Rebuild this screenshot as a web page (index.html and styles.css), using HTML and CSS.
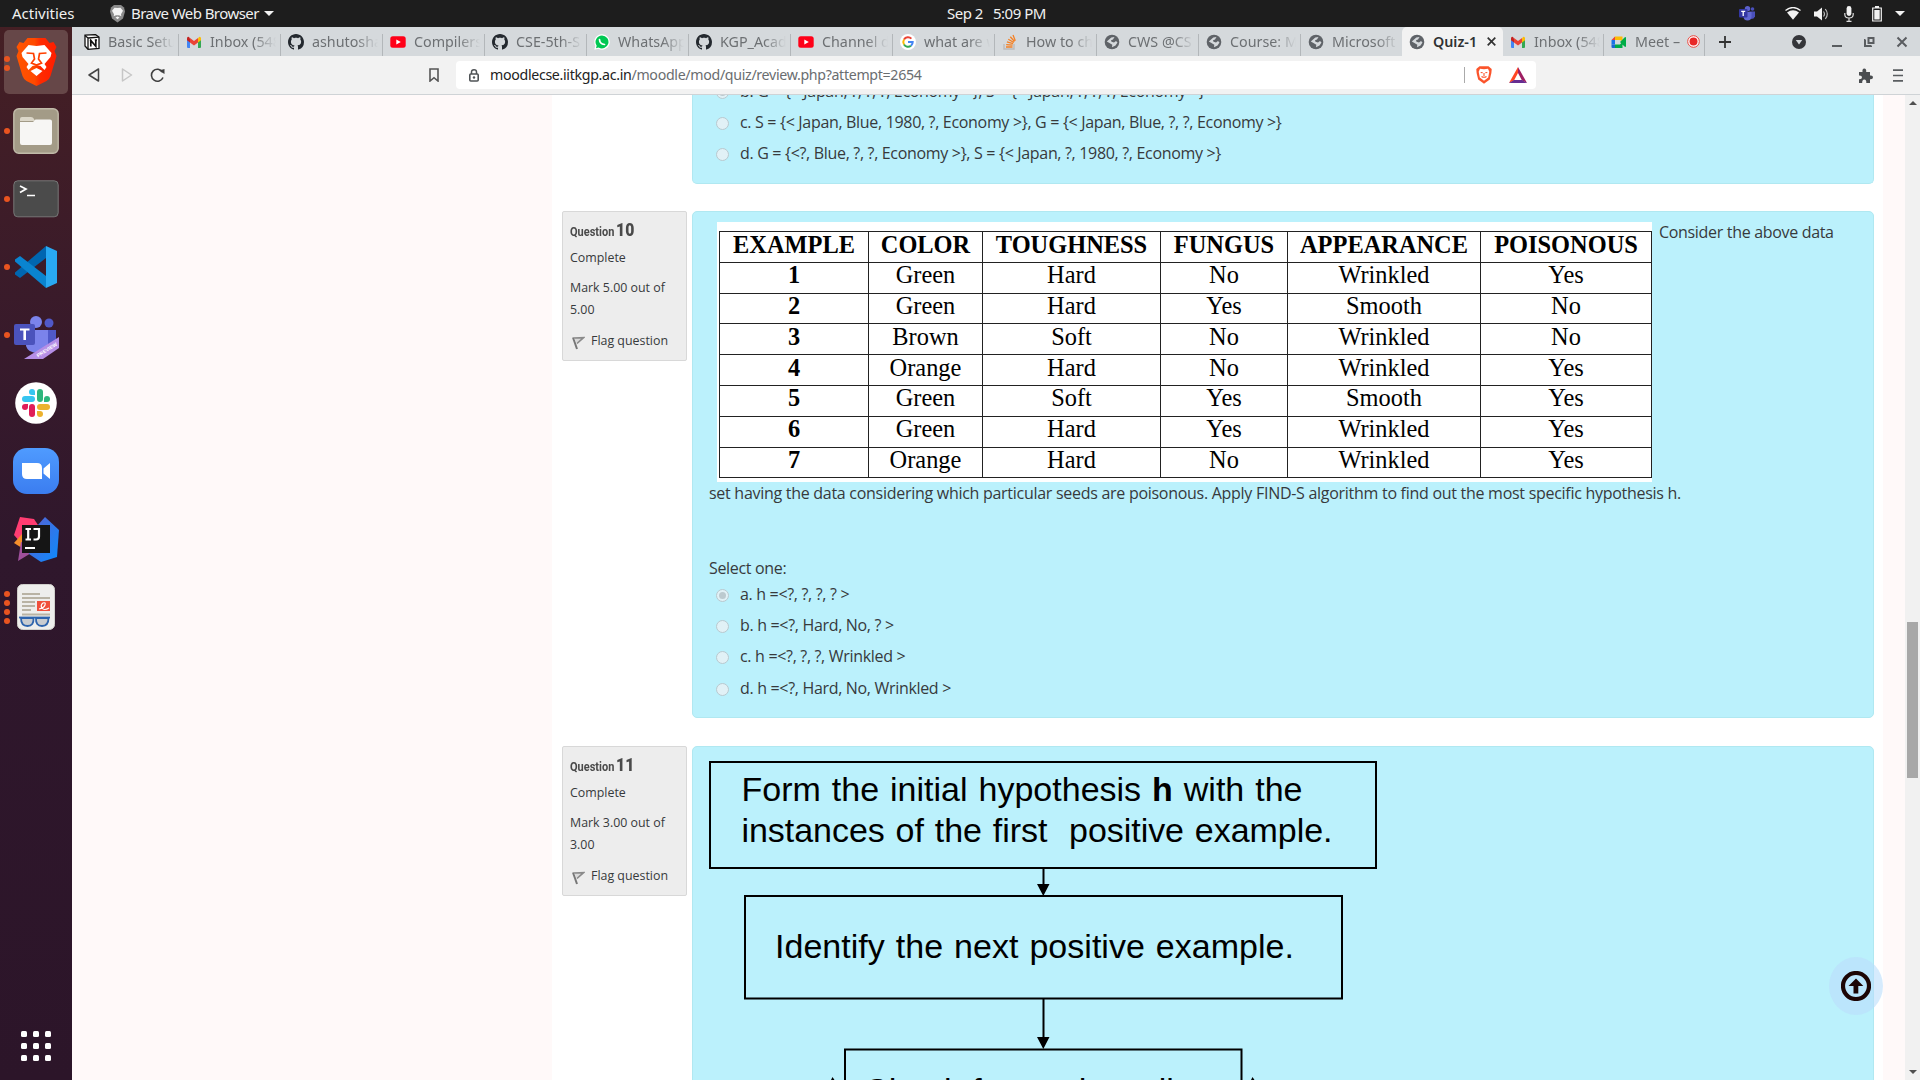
FILE: index.html
```html
<!DOCTYPE html>
<html lang="en">
<head>
<meta charset="utf-8">
<title>Quiz-1</title>
<link rel="stylesheet" href="styles.css">
</head>
<body>
<svg width="0" height="0" class="defs">
  <defs>
    <linearGradient id="bg-brave" x1="0" x2="1" y1="0" y2="0"><stop offset="0" stop-color="#ff5500"/><stop offset=".45" stop-color="#ff4a00"/><stop offset=".6" stop-color="#ff2a00"/><stop offset="1" stop-color="#ff1d00"/></linearGradient>
    <linearGradient id="bg-zoom" x1="0" x2="0" y1="0" y2="1"><stop offset="0" stop-color="#4f9bff"/><stop offset="1" stop-color="#3b7df0"/></linearGradient>
    <linearGradient id="bg-ij" x1="0" x2="1" y1="0" y2="1"><stop offset="0" stop-color="#5a5fd0"/><stop offset="1" stop-color="#0a8cff"/></linearGradient>
    <symbol id="i-lion" viewBox="0 0 40 48">
      <path fill="url(#bg-brave)" d="M11 0H29L33 5L37 4L40 9L38 13L40 18L34 38Q33 41 30 43L20 48L10 43Q7 41 6 38L0 18L2 13L0 9L3 4L7 5Z"/>
      <path fill="#fff" d="M20 8L28 7L35 15L34 19L28 26L30 29L28 32L24 28L20 27L16 28L12 32L10 29L12 26L6 19L5 15L12 7ZM20 30L26 33L20 38L14 33Z"/>
      <path fill="none" stroke="#ff4000" stroke-width="1.7" d="M10 15L17 15.500L18 21L15 25L20 27L25 25L22 21L23 15.500L30 15"/>
    </symbol>
    <symbol id="i-github" viewBox="0 0 16 16"><path fill="#24292f" d="M8 0C3.580 0 0 3.580 0 8c0 3.540 2.290 6.530 5.470 7.590.4.070.55-.17.55-.38 0-.19-.01-.82-.01-1.490-2.010.37-2.530-.49-2.690-.94-.09-.23-.48-.94-.82-1.130-.28-.15-.68-.52-.01-.53.63-.01 1.080.58 1.230.82.72 1.210 1.870.87 2.330.66.07-.52.28-.87.51-1.070-1.780-.2-3.640-.89-3.640-3.950 0-.87.31-1.590.82-2.150-.08-.2-.36-1.020.08-2.120 0 0 .67-.21 2.200.82.64-.18 1.320-.27 2-.27s1.360.09 2 .27c1.530-1.040 2.200-.82 2.200-.82.44 1.100.16 1.920.08 2.120.51.56.82 1.270.82 2.150 0 3.070-1.870 3.750-3.650 3.950.29.25.54.73.54 1.480 0 1.070-.01 1.930-.01 2.200 0 .21.15.46.55.38A8.010 8.010 0 0 0 16 8c0-4.420-3.580-8-8-8z"/></symbol>
    <symbol id="i-gmail" viewBox="0 0 16 16"><path fill="#4285f4" d="M1 4v9q0 1 1 1h2V7z"/><path fill="#34a853" d="M15 4v9q0 1-1 1h-2V7z"/><path fill="#fbbc04" d="M12 4.500L13 3q2-.7 2 1.500v1.800L12 8.500z"/><path fill="#c5221f" d="M1 4.500Q1 2.300 3 3l1 1.500v4L1 6.300z"/><path fill="#ea4335" d="M4 4l4 3 4-3v4.500l-4 3-4-3z"/></symbol>
    <symbol id="i-yt" viewBox="0 0 16 16"><rect x=".3" y="2.300" width="15.400" height="11.400" rx="2.500" fill="#ff0018"/><path fill="#fff" d="M6.300 5.600L10.800 8l-4.500 2.400z"/></symbol>
    <symbol id="i-globe" viewBox="0 0 16 16"><circle cx="8" cy="8" r="7.300" fill="#5f6368"/><path fill="#d5d9dc" d="M2.800 7.500L7.300 3.500L10.500 3L9 5.500L7 6.200L7.500 7.800L10 8.500L12 7L13.500 8.500L11.500 11.500L8 13.300L8.300 10.700L5 8.800z"/></symbol>
  </defs>
</svg>

<header class="topbar">
  <span class="activities">Activities</span>
  <svg class="app-icon" width="15" height="18" viewBox="0 0 15 18"><path fill="#8b8b8b" d="M4 0h7l3 2.500 1 4-2 7-5.500 4-5.500-4-2-7 1-4z"/><path fill="#f4f4f4" d="M7.500 3l3-.3 2.500 3-2 3.500.3 2-2.300-1-1.500 0-1.500 0-2.300 1 .3-2L2 5.700l2.500-3zM7.500 11.500l2 1-2 1.700-2-1.700z"/></svg>
  <span class="app-name">Brave Web Browser</span>
  <i class="caret"></i>
  <span class="date">Sep 2</span><span class="time">5:09 PM</span>
  <div class="tray">
    <svg class="tr-teams" width="17" height="15" viewBox="0 0 17 15"><circle cx="8.500" cy="2.800" r="2.700" fill="#5b61cc"/><circle cx="13.500" cy="3" r="1.800" fill="#4a50bb"/><path fill="#4a50bb" d="M10 5.500h6v5q-1 2.500-4 2.500z"/><path fill="#6268d3" d="M5 6h7.500v5q-.5 3.500-4 3.500t-4-3.500z"/><rect y="3" width="8.500" height="8.500" rx="1" fill="#3437a3"/><path stroke="#fff" stroke-width="1.300" d="M2.200 5.300h4M4.200 5v5"/></svg>
    <svg class="tr-wifi" width="16" height="13" viewBox="0 0 16 13"><path d="M.5 3.500Q8-2.500 15.500 3.500" fill="none" stroke="#f2f2f2" stroke-width="1.300"/><path fill="#f2f2f2" d="M2 5.500Q8 .800 14 5.500L8 12.800z"/></svg>
    <svg class="tr-vol" width="15" height="14" viewBox="0 0 15 14"><path fill="#f2f2f2" d="M0 4.500h3L8 .5v13L3 9.500H0z"/><path d="M9.500 4.500q2 2.500 0 5M11.300 2q4 5 0 10" fill="none" stroke="#bbb" stroke-width="1.200"/></svg>
    <svg class="tr-mic" width="10" height="16" viewBox="0 0 10 16"><rect x="2.600" y="0" width="4.800" height="10" rx="2.400" fill="#f2f2f2"/><path d="M.8 7v1.500q0 3.500 4.200 3.500t4.200-3.500V7M5 12v3M2.500 15.300h5" fill="none" stroke="#ddd" stroke-width="1.200"/></svg>
    <svg class="tr-bat" width="10" height="16" viewBox="0 0 10 16"><path fill="none" stroke="#f2f2f2" stroke-width="1.200" d="M.7 2h8.600v13H.7z"/><path fill="#f2f2f2" d="M3 0h4v2H3zM2.300 4h5.400v9.500H2.300z"/></svg>
    <i class="caret"></i>
  </div>
</header>

<div class="desktop">
  <nav class="dock">
    <div class="app active"><i class="dots"><b></b><b></b></i><svg width="41" height="48"><use href="#i-lion"/></svg></div>
    <div class="app"><i class="dots"><b></b></i>
      <svg width="46" height="46" viewBox="0 0 46 46"><rect x=".8" y=".8" width="44.400" height="44.400" rx="5" fill="#a39b87" stroke="#c1bba9" stroke-width="1.400"/><path fill="#dcd7c9" d="M7 13V11q0-2 2-2h9q2 0 3 2l1 2z"/><path fill="#f7f6f4" d="M7 14h13l2.500-2.500H37q2 0 2 2V35q0 2-2 2H9q-2 0-2-2z"/></svg></div>
    <div class="app"><i class="dots"><b></b></i>
      <svg width="46" height="38" viewBox="0 0 46 38"><rect x=".8" y=".8" width="44.400" height="36" rx="4" fill="#4b4b4b" stroke="#777" stroke-width="1"/><path d="M7 6l6 3-6 3.500M14 15.500h8" fill="none" stroke="#fff" stroke-width="1.700"/></svg></div>
    <div class="app"><i class="dots"><b></b></i>
      <svg width="42" height="42" viewBox="0 0 42 42"><path fill="#0066b0" d="M31 0v12L5 32l-5-3.500v-2z"/><path fill="#0a84d0" d="M5 10L31 30v12L0 15.500v-2z"/><path fill="#29a9f2" d="M31 0l11 5v32l-11 5z"/></svg></div>
    <div class="app teams"><i class="dots"><b></b></i>
      <svg width="46" height="46" viewBox="0 0 46 46"><circle cx="23" cy="7" r="6" fill="#7b83eb"/><circle cx="36" cy="8" r="4.500" fill="#5059c9"/><path fill="#5059c9" d="M30 15h13v12q-1 7-8 7-5 0-8-3z"/><path fill="#7b83eb" d="M14 15h21v14q0 9-10 9t-12-7z"/><rect x="1" y="9" width="21" height="21" rx="2" fill="#4b53bc"/><path fill="#fff" d="M7 13.500h9.500v2H13V25h-2.600v-9.500H7z"/><path fill="#b58ee6" d="M11 44L46 22v11L30 44z"/><text transform="translate(25 42.500) rotate(-32)" class="preview">PREVIEW</text></svg></div>
    <div class="app">
      <svg width="42" height="42" viewBox="0 0 42 42"><circle cx="21" cy="21" r="20.800" fill="#fff"/><g fill="#36c5f0"><rect x="7" y="14" width="13" height="6" rx="3"/><path d="M17 7a3 3 0 0 1 3 3v3h-3a3 3 0 0 1 0-6z"/></g><g fill="#2eb67d"><rect x="22" y="7" width="6" height="13" rx="3"/><path d="M35 17a3 3 0 0 1-3 3h-3v-3a3 3 0 0 1 6 0z"/></g><g fill="#ecb22e"><rect x="22" y="22" width="13" height="6" rx="3"/><path d="M25 35a3 3 0 0 1-3-3v-3h3a3 3 0 0 1 0 6z"/></g><g fill="#e01e5a"><rect x="14" y="22" width="6" height="13" rx="3"/><path d="M7 25a3 3 0 0 1 3-3h3v3a3 3 0 0 1-6 0z"/></g></svg></div>
    <div class="app">
      <svg width="46" height="46" viewBox="0 0 46 46"><rect width="46" height="46" rx="14" fill="url(#bg-zoom)"/><path fill="#fff" d="M9 15h15q5 0 5 5v11H14q-5 0-5-5zM30.500 20.500L37 15v16l-6.500-5.500z"/></svg></div>
    <div class="app">
      <svg width="46" height="46" viewBox="0 0 46 46"><path fill="#ff3d72" d="M7 1l14 2 8 12L8 27 1 19z"/><path fill="#f58f2c" d="M1 27l8-9v14z"/><path fill="#a0509c" d="M8 26l20 5L5 45z"/><path fill="url(#bg-ij)" d="M32 1l14 13-2 27-16 5-12-8 8-28z"/><rect x="9" y="9" width="28" height="28" fill="#151515"/><path d="M12.500 13h5.500M12.500 23.500h5.500M15.200 13v10.500M20.500 13h5.500v7.500q0 3-3 3h-2.500" fill="none" stroke="#fff" stroke-width="2.200"/><path fill="#fff" d="M12 31h10v2H12z"/></svg></div>
    <div class="app"><i class="dots"><b></b><b></b><b></b><b></b></i>
      <svg width="38" height="46" viewBox="0 0 38 46"><rect x=".5" y=".5" width="37" height="45" rx="5" fill="#eeeeec" stroke="#cfcfcb"/><path stroke="#b9b3a4" stroke-width="2" d="M5 10h18M5 14h28M5 18h13M5 22h13M5 26h9M5 30.500h28"/><rect x="20" y="17" width="13" height="10" fill="#f0503c"/><path d="M22 25q5-1 6-4t-2-2q-3 2-1 5t7 0" fill="none" stroke="#fff" stroke-width="1.200"/><g fill="#c9ccd0" stroke="#2e64ad" stroke-width="1.800"><path d="M4 34h12.500q.5 8-6 8t-6.500-8zM19 34h12.500q0 8-6.500 8t-6-8z"/><path d="M2 33.500h31"/></g></svg></div>
    <div class="launcher"><b></b><b></b><b></b><b></b><b></b><b></b><b></b><b></b><b></b></div>
  </nav>

  <div class="browser">
    <div class="tabs">
      <div class="tab first"><svg class="fav" viewBox="0 0 16 16"><path fill="#fff" stroke="#111" stroke-width="1.300" d="M1 1.200l10.500-.6L15 3v11.500l-11 .8L1 12z"/><path fill="none" stroke="#111" stroke-width="1.300" d="M1 1.500L4 4v11M4 4l11-.8"/><path fill="none" stroke="#111" stroke-width="1.700" d="M6.800 12.500V6.500l5 5.800V6M5.800 6.500h2M10.800 6h2.200"/></svg><span>Basic Setu</span></div>
      <div class="tab"><svg class="fav"><use href="#i-gmail"/></svg><span>Inbox (548</span></div>
      <div class="tab"><svg class="fav"><use href="#i-github"/></svg><span>ashutosha</span></div>
      <div class="tab"><svg class="fav"><use href="#i-yt"/></svg><span>Compilers</span></div>
      <div class="tab"><svg class="fav"><use href="#i-github"/></svg><span>CSE-5th-S</span></div>
      <div class="tab"><svg class="fav" viewBox="0 0 16 16"><path fill="#fff" d="M8 .3a7.700 7.700 0 1 1-3.700 14.400L.3 15.700l1-3.900A7.700 7.700 0 0 1 8 .3z"/><path fill="#00c853" d="M8 1.500a6.500 6.500 0 1 1-3.500 12L2 14.200l.7-2.500A6.500 6.500 0 0 1 8 1.500z"/><path fill="none" stroke="#fff" stroke-width="1.700" stroke-linecap="round" d="M5.500 5.500q.2 4.500 5 5"/></svg><span>WhatsApp</span></div>
      <div class="tab"><svg class="fav"><use href="#i-github"/></svg><span>KGP_Acad</span></div>
      <div class="tab"><svg class="fav"><use href="#i-yt"/></svg><span>Channel d</span></div>
      <div class="tab"><svg class="fav" viewBox="0 0 16 16"><circle cx="8" cy="8" r="8" fill="#fff"/><g fill="none" stroke-width="2"><path stroke="#ea4335" d="M4 5.500A4.800 4.800 0 0 1 11.400 4.600"/><path stroke="#fbbc05" d="M4 5.500A4.800 4.800 0 0 0 4 10.500"/><path stroke="#34a853" d="M4 10.500A4.800 4.800 0 0 0 11 11.700"/><path stroke="#4285f4" d="M11 11.700A4.800 4.800 0 0 0 12.700 8H8"/></g></svg><span>what are w</span></div>
      <div class="tab"><svg class="fav" viewBox="0 0 16 16"><path d="M2 10v5h10v-5" fill="none" stroke="#bcbbbb" stroke-width="1.400"/><path d="M4 13h6.500M4.200 10.600l6.400.6M4.900 7.900l6.200 1.700M6.300 5.200l5.500 3.300M8.300 2.700l4.200 4.800M11 1l2.300 5.800" stroke="#f48024" stroke-width="1.300"/></svg><span>How to ch</span></div>
      <div class="tab"><svg class="fav"><use href="#i-globe"/></svg><span>CWS @CS</span></div>
      <div class="tab"><svg class="fav"><use href="#i-globe"/></svg><span>Course: M</span></div>
      <div class="tab noline"><svg class="fav"><use href="#i-globe"/></svg><span>Microsoft</span></div>
      <div class="tab current"><svg class="fav"><use href="#i-globe"/></svg><span>Quiz-1</span><svg class="close" width="9" height="9" viewBox="0 0 9 9"><path d="M.7.700l7.600 7.600M8.300.700L.7 8.300" stroke="#333" stroke-width="1.700"/></svg></div>
      <div class="tab narrow"><svg class="fav"><use href="#i-gmail"/></svg><span>Inbox (548</span></div>
      <div class="tab narrow meet"><svg class="fav" viewBox="0 0 16 16"><path fill="#ea4335" d="M.5 6L4 2.500V6z"/><path fill="#1a73e8" d="M.5 6H4v4.500H.5z"/><path fill="#1967d2" d="M.5 10.500H4V14H1.500q-1 0-1-1z"/><path fill="#fbbc04" d="M4 2.500h7.500V7L8.500 6H4z"/><path fill="#00ac47" d="M4 10.500h5l2.500-3V14H4zM9 8l4.500-4.500q1.500-1 1.500.5v8q0 1.500-1.500.5z"/></svg><span>Meet –</span><svg class="rec" width="13" height="13" viewBox="0 0 13 13"><circle cx="6.500" cy="6.500" r="5.800" fill="#fff" stroke="#e8453c" stroke-width="1"/><circle cx="6.500" cy="6.500" r="4" fill="#e82727"/></svg></div>
      <svg class="plus" width="12" height="12" viewBox="0 0 12 12"><path d="M6 0v12M0 6h12" stroke="#333" stroke-width="1.800"/></svg>
      <svg class="win" width="112" height="16" viewBox="0 0 112 16"><circle cx="7" cy="8" r="7" fill="#35363a"/><path fill="#d5d9dc" d="M3.800 6h6.400L7 10.500z"/><path stroke="#5a5d60" stroke-width="2" d="M40 12h10"/><path fill="none" stroke="#5a5d60" stroke-width="2" d="M73.500 6H73v6h6v-.5M76.500 4h5v5h-5z"/><path stroke="#5a5d60" stroke-width="2" d="M105.500 3.500l9 9M114.500 3.500l-9 9"/></svg>
    </div>
    <div class="toolbar">
      <svg class="back" width="12" height="14" viewBox="0 0 12 14"><path d="M10.500 1v12L1 7z" fill="none" stroke="#444" stroke-width="1.500" stroke-linejoin="round"/></svg>
      <svg class="fwd" width="12" height="14" viewBox="0 0 12 14"><path d="M1.500 1v12L10.500 7z" fill="none" stroke="#c6c6c6" stroke-width="1.500" stroke-linejoin="round"/></svg>
      <svg class="reload" width="15" height="15" viewBox="0 0 15 15"><path d="M12.500 4A6 6 0 1 0 13 9.500" fill="none" stroke="#3f3f3f" stroke-width="1.600"/><path fill="#3f3f3f" d="M8.800 2.500L14.500 1v5z"/></svg>
      <svg class="mark" width="10" height="14" viewBox="0 0 10 14"><path d="M1 1h8v12L5 9.700 1 13z" fill="none" stroke="#555" stroke-width="1.600"/></svg>
      <div class="omni">
        <svg class="lock" width="10" height="13" viewBox="0 0 10 13"><rect x=".8" y="5" width="8.400" height="7" rx="1" fill="none" stroke="#4f5356" stroke-width="1.600"/><path d="M2.500 5V3q0-2.200 2.500-2.200T7.500 3v2" fill="none" stroke="#4f5356" stroke-width="1.500"/><circle cx="5" cy="8.500" r="1.200" fill="#4f5356"/></svg>
        <span class="url"><em>moodlecse.iitkgp.ac.in</em>/moodle/mod/quiz/review.php?attempt=2654</span>
        <i class="sep"></i>
        <svg class="shield" width="16" height="18" viewBox="0 0 16 18"><path fill="#fb542b" d="M3.500.3h9L15.700 3l-.3 4-1.600 6.500L8 17.700 2.200 13.500.6 7 .3 3z"/><path fill="#fff" d="M8 3.300l4-.5 1.300 3-1.100 5.800L8 14.800 3.800 11.600 2.700 5.800l1.300-3z"/><path d="M4.700 6.500l2 .3M11.300 6.500l-2 .3M8 7v3M5.500 10.500q2.500 1.500 5 0" stroke="#fb542b" stroke-width="1.100" fill="none"/></svg>
        <svg class="bat" width="18" height="16" viewBox="0 0 18 16"><path fill="#ff4724" d="M9 0L0 16l5-2.500L9 6z"/><path fill="#9e1f63" d="M9 0l9 16-5-2.500L9 6z"/><path fill="#662d91" d="M0 16h18l-5-3H5z"/></svg>
      </div>
      <svg class="ext" width="15" height="15" viewBox="0 0 15 15"><path fill="#4a4d50" d="M1 4h3.500Q4 .500 6.300.500T8.200 4H12v3.500q3-.5 3 1.800t-3 1.900V15H8.300q.3-3.500-2-3.500T4.200 15H1v-3.800q3 .2 3-1.900T1 7.500z"/></svg>
      <svg class="menu" width="10" height="13" viewBox="0 0 10 13"><path d="M0 1.200h10M0 6.500h10M0 11.800h10" stroke="#5a5d60" stroke-width="1.700"/></svg>
    </div>

    <div class="viewport">
      <div class="gutter"></div>
      <main class="page">
        <section class="question prev">
          <div class="body">
            <label class="opt"><i class="radio on"></i>b. G = {&lt; Japan, ?, ?, ?, Economy &gt;}, S = {&lt; Japan, ?, ?, ?, Economy &gt;}</label>
            <label class="opt"><i class="radio"></i>c. S = {&lt; Japan, Blue, 1980, ?, Economy &gt;}, G = {&lt; Japan, Blue, ?, ?, Economy &gt;}</label>
            <label class="opt"><i class="radio"></i>d. G = {&lt;?, Blue, ?, ?, Economy &gt;}, S = {&lt; Japan, ?, 1980, ?, Economy &gt;}</label>
          </div>
        </section>

        <section class="question q10">
          <aside class="info">
            <h3><span>Question</span><b>10</b></h3>
            <p>Complete</p>
            <p class="grade">Mark 5.00 out of<br>5.00</p>
            <p class="flag"><svg width="13" height="14" viewBox="0 0 13 14"><path d="M1 1.500L5 13" stroke="#777" stroke-width="2"/><path d="M2 2l9.500-.3L5 7.500" fill="#d9d9d9" stroke="#8a8a8a" stroke-width="1.600"/></svg>Flag question</p>
          </aside>
          <div class="body">
            <div class="lead">
              <div class="figure">
                <table class="data">
                  <colgroup><col class="c1"><col class="c2"><col class="c3"><col class="c4"><col class="c5"><col class="c6"></colgroup>
                  <tr class="head"><th>EXAMPLE</th><th>COLOR</th><th>TOUGHNESS</th><th>FUNGUS</th><th>APPEARANCE</th><th>POISONOUS</th></tr>
                  <tr><th>1</th><td>Green</td><td>Hard</td><td>No</td><td>Wrinkled</td><td>Yes</td></tr>
                  <tr><th>2</th><td>Green</td><td>Hard</td><td>Yes</td><td>Smooth</td><td>No</td></tr>
                  <tr><th>3</th><td>Brown</td><td>Soft</td><td>No</td><td>Wrinkled</td><td>No</td></tr>
                  <tr><th>4</th><td>Orange</td><td>Hard</td><td>No</td><td>Wrinkled</td><td>Yes</td></tr>
                  <tr><th>5</th><td>Green</td><td>Soft</td><td>Yes</td><td>Smooth</td><td>Yes</td></tr>
                  <tr><th>6</th><td>Green</td><td>Hard</td><td>Yes</td><td>Wrinkled</td><td>Yes</td></tr>
                  <tr><th>7</th><td>Orange</td><td>Hard</td><td>No</td><td>Wrinkled</td><td>Yes</td></tr>
                </table>
              </div>
              <span>Consider the above data</span>
            </div>
            <p class="rest">set having the data considering which particular seeds are poisonous. Apply FIND-S algorithm to find out the most specific hypothesis h.</p>
            <p class="select">Select one:</p>
            <label class="opt"><i class="radio on"></i>a. h =&lt;?, ?, ?, ? &gt;</label>
            <label class="opt"><i class="radio"></i>b. h =&lt;?, Hard, No, ? &gt;</label>
            <label class="opt"><i class="radio"></i>c. h =&lt;?, ?, ?, Wrinkled &gt;</label>
            <label class="opt"><i class="radio"></i>d. h =&lt;?, Hard, No, Wrinkled &gt;</label>
          </div>
        </section>

        <section class="question q11">
          <aside class="info">
            <h3><span>Question</span><b>11</b></h3>
            <p>Complete</p>
            <p class="grade">Mark 3.00 out of<br>3.00</p>
            <p class="flag"><svg width="13" height="14" viewBox="0 0 13 14"><path d="M1 1.500L5 13" stroke="#777" stroke-width="2"/><path d="M2 2l9.500-.3L5 7.500" fill="#d9d9d9" stroke="#8a8a8a" stroke-width="1.600"/></svg>Flag question</p>
          </aside>
          <div class="body">
            <svg class="flow" width="720" height="333" viewBox="693 747 720 333">
              <g fill="none" stroke="#000" stroke-width="2">
                <path d="M710 762H1376V868H710zM745 896H1342V998.500H745zM845 1100V1049.500H1241.500V1100"/>
                <path d="M1043.500 868V888M1043.500 999V1040"/>
              </g>
              <path d="M1037 884h12.500l-6.200 12zM1037 1037h12.500l-6.200 12z"/>
              <text x="741.500" y="800.500" textLength="561">Form the initial hypothesis <tspan font-weight="bold">h</tspan> with the</text>
              <text x="741.500" y="842" textLength="591" xml:space="preserve">instances of the first  positive example.</text>
              <text x="775" y="958" textLength="519">Identify the next positive example.</text>
              <text x="864" y="1102" textLength="369">Check for each attribute</text>
              <path d="M831 1080l1.500-3 2 3zM1251 1080l1.500-3 2 3z"/>
            </svg>
          </div>
        </section>
      </main>
      <div class="gutter right"></div>
      <div class="scrollbar"><i class="up"></i><i class="thumb"></i><i class="down"></i></div>
      <div class="totop"><svg width="30" height="30" viewBox="0 0 30 30"><circle cx="15" cy="15" r="13" fill="none" stroke="#1c0505" stroke-width="4.200"/><path fill="#1c0505" d="M15 7.500l7.300 7.500h-5v7.500h-4.800V15h-5z"/></svg></div>
    </div>
  </div>
</div>
</body>
</html>
```

FILE: styles.css
```css
* { box-sizing: border-box; }
body { margin: 0; width: 1920px; height: 1080px; overflow: hidden; background: #fff; font-family: "Open Sans", "Noto Sans", sans-serif; color: #373a3c; }
.defs { position: absolute; }
p, h3 { margin: 0; }
i, em { font-style: normal; }

.topbar { display: flex; align-items: center; height: 27px; background: #1d1d1d; color: #f0f0f0; font: 15px/27px "Noto Sans", sans-serif; white-space: nowrap; }
.activities { width: 98px; padding-left: 12px; }
.app-icon { margin-left: 12px; }
.app-name { margin-left: 6px; width: 128px; letter-spacing: -.56px; }
.caret { border: 5px solid transparent; border-top-color: #f2f2f2; border-bottom: 0; margin-left: 5px; }
.date { margin-left: 673px; width: 46px; letter-spacing: -.5px; }
.time { width: 56px; letter-spacing: -.5px; }
.tray { display: flex; align-items: center; margin-left: auto; padding-right: 15px; }
.tr-wifi { margin-left: 29px; }
.tr-vol { margin-left: 13px; }
.tr-mic { margin-left: 15px; }
.tr-bat { margin-left: 18px; }
.tray .caret { margin-left: 13px; }

.desktop { display: flex; height: 1053px; }
.dock { width: 72px; display: flex; flex-direction: column; padding-top: 1px; background: linear-gradient(#451f24, #381a2b 30%, #2f172c 50%, #2c1529); }
.app { position: relative; height: 68px; flex: none; display: flex; align-items: center; justify-content: center; }
.app:not(.active) { padding-top: 2px; }
.app.teams { padding-top: 8px; }
.app.active::before { content: ""; position: absolute; inset: 2px 4px; background: #664748; border-radius: 5px; }
.app svg { position: relative; }
.dots { position: absolute; left: 4px; top: 1px; height: 100%; display: flex; flex-direction: column; justify-content: center; gap: 3px; }
.dots b { width: 6px; height: 6px; border-radius: 50%; background: #e95420; }
.preview { font: bold 5px "Liberation Sans", sans-serif; fill: #fff; }
.launcher { margin: auto auto 19px; display: grid; grid-template-columns: repeat(3, 6px); gap: 6px; }
.launcher b { width: 6px; height: 6px; border-radius: 1.500px; background: #fff; }

.browser { flex: 1; display: flex; flex-direction: column; min-width: 0; }
.tabs { height: 29px; display: flex; align-items: center; background: #d5d9dc; color: #6d7073; font: 14.300px/27px "Noto Sans", sans-serif; }
.tab { width: 102px; height: 29px; display: flex; align-items: center; padding-left: 7px; flex: none; position: relative; }
.tab::after { content: ""; position: absolute; right: 0; top: 7px; bottom: 0; width: 1px; background: #b3b7ba; }
.tab.noline::after, .tab.current::after { display: none; }
.tab.first { width: 107px; padding-left: 12px; }
.tab.noline, .tab.current, .tab.narrow { width: 101px; }
.fav { width: 16px; height: 16px; flex: none; margin-right: 8px; }
.tab > span { width: 66px; overflow: hidden; white-space: nowrap; -webkit-mask-image: linear-gradient(90deg, #000 44px, transparent 66px); }
.tab.current { background: #f2f2f2; border-radius: 5px 5px 0 0; color: #2f3133; font-weight: 600; }
.tab.current > span { width: 48px; -webkit-mask-image: none; }
.close { margin-left: 6px; }
.tab.meet > span { width: 45px; }
.rec { margin-left: 7px; }
.plus { margin-left: 14px; }
.win { margin-left: 61px; overflow: visible; }

.toolbar { height: 39px; display: flex; align-items: center; background: #f2f2f2; border-bottom: 1px solid #cfd3d6; }
.back { margin-left: 16px; }
.fwd { margin-left: 21px; }
.reload { margin-left: 17px; }
.mark { margin-left: 264px; }
.omni { width: 1080px; height: 28px; margin-left: 17px; background: #fff; border-radius: 4px; display: flex; align-items: center; padding-left: 13px; }
.url { width: 978px; margin-left: 11px; font: 14.200px/27px "Noto Sans", sans-serif; letter-spacing: -.32px; color: #6a6d70; white-space: nowrap; height: 28px; }
.url em { color: #222; }
.sep { width: 1px; height: 16px; background: #aaa; margin-left: -4px; }
.shield { margin-left: 11px; }
.bat { margin-left: 17px; }
.ext { margin-left: 322px; }
.menu { margin-left: 20px; }

.viewport { position: relative; flex: 1; display: flex; overflow: hidden; min-height: 0; }
.gutter { width: 480px; background: #fff9f9; }
.gutter.right { width: 22px; }
.page { width: 1331px; padding-left: 10px; font-size: 16px; letter-spacing: -.32px; }
.question { display: flex; align-items: flex-start; }
.question .body { width: 1182px; margin-left: 5px; border: 1px solid #b0e8f1; border-radius: 5px; background: #bbf1fc; padding: 0 16px; }
.prev { justify-content: flex-end; padding-right: 9px; }
.prev .body { height: 89px; display: flex; flex-direction: column; justify-content: flex-end; padding-bottom: 14px; border-top: 0; border-radius: 0 0 5px 5px; overflow: hidden; }
.opt { display: flex; align-items: center; height: 31.300px; flex: none; white-space: nowrap; padding-left: 7px; }
.radio { width: 13px; height: 13px; border-radius: 50%; border: 1px solid #b9c9cf; background: #e1f1f6; margin: 3px 11px 0 0; display: flex; }
.radio.on::after { content: ""; width: 7px; height: 7px; margin: 2px; border-radius: 50%; background: #bccacf; }
.q10 { margin-top: 27px; }
.q10 .body { height: 507px; }
.q11 { margin-top: 28px; }
.q11 .body { height: 340px; padding: 0; }

.info { width: 125px; height: 150px; background: #ededed; border: 1px solid #d8d8d8; border-radius: 2px; padding: 8px 0 0 7px; font-size: 12.400px; line-height: 22px; letter-spacing: 0; }
.info h3 { font: bold 12px/20px Roboto, sans-serif; display: flex; align-items: baseline; color: #4a4a4a; height: 20px; }
.info h3 span { width: 46px; transform: scaleX(.88); transform-origin: 0 0; font-size: 12.500px; }
.info h3 b { font-size: 17.500px; transform: scaleX(.9); transform-origin: 0 0; }
.info p { margin-top: 6.500px; }
.info .grade { margin-top: 8px; }
.info .flag { margin-top: 9px; display: flex; align-items: center; }
.flag svg { margin: 4px 6px 0 2px; }

.lead { display: flex; }
.figure { width: 935px; height: 260px; margin: 10px 7px 0 8px; background: #fff; padding: 9px 0 0 2px; }
.lead > span { line-height: 24px; margin-top: 8px; }
.data { width: 933px; table-layout: fixed; border-collapse: collapse; font: 24.400px/23px "Liberation Serif", serif; letter-spacing: 0; color: #000; }
.data tr { height: 30.800px; }
.data th, .data td { border: 1px solid #222; padding: 0 0 6px; text-align: center; white-space: nowrap; }
.data .head th { padding-bottom: 4px; }
.c1 { width: 149px; } .c2 { width: 114px; } .c3 { width: 178px; } .c4 { width: 127px; } .c5 { width: 193px; } .c6 { width: 171px; }
.rest { line-height: 24px; margin-top: -1px; white-space: nowrap; letter-spacing: -.28px; }
.select { line-height: 24px; margin: 51px 0 -2px; }
.flow { display: block; font: 34px "Liberation Sans", sans-serif; letter-spacing: 0; word-spacing: 1.500px; }

.scrollbar { width: 15px; background: #f1f1f1; display: flex; flex-direction: column; align-items: center; }
.up { border: 4px solid transparent; border-bottom-color: #505050; border-top: 0; margin-top: 6px; }
.thumb { width: 11px; height: 156px; background: #a8a8a8; margin-top: 517px; }
.down { border: 4px solid transparent; border-top-color: #505050; border-bottom: 0; margin: auto 0 6px; }
.totop { position: absolute; left: 1757px; top: 862px; width: 54px; height: 58px; border-radius: 50%; background: rgba(187, 222, 251, .6); display: flex; align-items: center; justify-content: center; }
```
